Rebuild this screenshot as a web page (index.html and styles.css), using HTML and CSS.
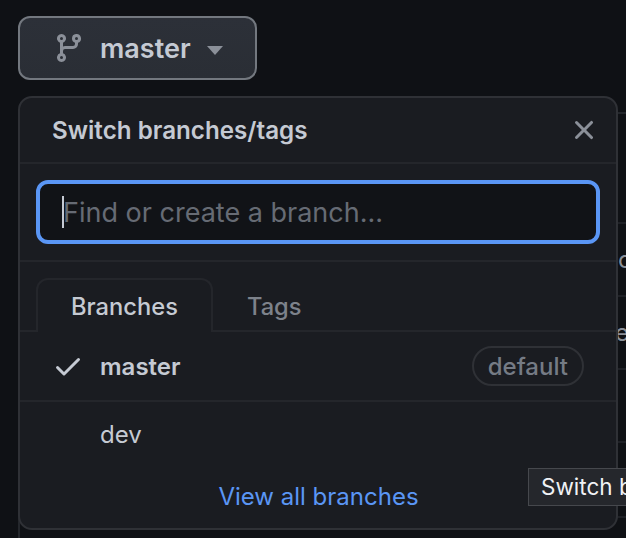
FILE: index.html
```html
<!DOCTYPE html>
<html lang="en">
<head>
<meta charset="utf-8">
<title>Switch branches</title>
<link rel="stylesheet" href="styles.css">
</head>
<body>
<div class="page">
  <button class="branch-btn">
    <svg class="icon-branch" viewBox="0 0 16 16" width="32" height="32"><path fill-rule="evenodd" d="M11.75 2.5a.75.75 0 100 1.5.75.75 0 000-1.5zm-2.25.75a2.25 2.25 0 113 2.122V6A2.5 2.5 0 0110 8.5H6a1 1 0 00-1 1v1.128a2.251 2.251 0 11-1.5 0V5.372a2.25 2.25 0 111.5 0v1.836A2.492 2.492 0 016 7h4a1 1 0 001-1v-.628A2.25 2.25 0 019.5 3.25zM4.25 12a.75.75 0 100 1.5.75.75 0 000-1.5zM3.5 3.25a.75.75 0 111.5 0 .75.75 0 01-1.5 0z"/></svg>
    <span class="branch-name">master</span>
    <span class="caret"></span>
  </button>

  <div class="files">
    <div class="file-row r1"></div>
    <div class="file-row r2"><span class="file-c">config</span></div>
    <div class="file-row r3"><span class="file-e">e</span></div>
    <div class="file-row r4"></div>
    <div class="file-row r5"></div>
    <div class="file-row r6"></div>

    <div class="popup">
      <header class="popup-head">
        <span class="popup-title">Switch branches/tags</span>
        <svg class="icon-x" viewBox="0 0 16 16" width="32" height="32"><path fill-rule="evenodd" d="M3.72 3.72a.75.75 0 011.06 0L8 6.94l3.22-3.22a.75.75 0 111.06 1.06L9.06 8l3.22 3.22a.75.75 0 11-1.06 1.06L8 9.06l-3.22 3.22a.75.75 0 01-1.06-1.06L6.94 8 3.72 4.78a.75.75 0 010-1.06z"/></svg>
      </header>
      <div class="filter">
        <div class="filter-input"><span class="text-caret"></span><span class="placeholder">Find or create a branch...</span></div>
      </div>
      <nav class="tabs">
        <span class="tab active">Branches</span>
        <span class="tab">Tags</span>
      </nav>
      <div class="row">
        <svg class="icon-check" viewBox="0 0 16 16" width="32" height="32"><path fill-rule="evenodd" d="M13.78 4.22a.75.75 0 010 1.06l-7.25 7.25a.75.75 0 01-1.06 0L2.22 9.28a.75.75 0 011.06-1.06L6 10.94l6.72-6.72a.75.75 0 011.06 0z"/></svg>
        <span class="row-name strong">master</span>
        <span class="badge">default</span>
      </div>
      <div class="row plain">
        <span class="row-name">dev</span>
      </div>
      <a class="view-all">View all branches</a>
    </div>
  </div>
  <div class="tooltip">Switch branches/tags</div>
</div>
</body>
</html>
```
FILE: styles.css
```css
* { box-sizing: border-box; }
html, body { margin: 0; height: 100%; }
body {
  background: #0f1115;
  font-family: Inter, "Noto Sans", "Liberation Sans", sans-serif;
  overflow: hidden;
}
.page {
  position: relative;
  width: 626px;
  height: 538px;
  padding: 16px 0 0 18px;
  overflow: hidden;
}
.branch-btn {
  display: flex;
  align-items: center;
  width: 239px;
  height: 64px;
  padding: 0 0 0 33px;
  background: linear-gradient(#2c3038, #2a2e35);
  border: 2px solid #73787f;
  border-radius: 12px;
  font: inherit;
  color: #c5cad3;
}
.icon-branch { fill: #8b9099; flex: none; }
.branch-name {
  margin: 2px 0 0 15px;
  font-size: 27px;
  font-weight: 600;
  line-height: 32px;
}
.caret {
  margin: 4px 0 0 16px;
  border-style: solid;
  border-width: 9px 8px 0;
  border-color: #8b9099 transparent transparent;
}
.files {
  position: relative;
  margin-top: 32px;
  width: 700px;
  height: 460px;
  border: solid #24272c;
  border-width: 2px 0 0 2px;
  border-top-left-radius: 12px;
}
.file-row {
  display: flex;
  align-items: center;
  height: 73px;
  border-bottom: 2px solid #1f2126;
  font-size: 24px;
  color: #8b9099;
}
.r1 { height: 110px; }
.r5 { height: 75px; }
.file-c { margin-left: 598px; }
.file-e { margin-left: 595px; }
.popup {
  position: absolute;
  left: -2px;
  top: -18px;
  width: 600px;
  height: 434px;
  display: flex;
  flex-direction: column;
  background: #1a1c21;
  border: 2px solid #2f3136;
  border-radius: 14px;
  overflow: hidden;
}
.popup-head {
  display: flex;
  align-items: center;
  justify-content: space-between;
  height: 66px;
  padding: 0 16px 0 32px;
  border-bottom: 2px solid #24262b;
  flex: none;
}
.popup-title {
  font-size: 24.2px;
  font-weight: 600;
  color: #c5cad3;
}
.icon-x { fill: #8b9099; }
.filter {
  flex: none;
  height: 98px;
  padding: 16px 16px 0;
  border-bottom: 2px solid #24262b;
}
.filter-input {
  display: flex;
  align-items: center;
  height: 64px;
  width: 564px;
  padding-left: 22px;
  background: #111317;
  border: 4px solid #5a96f5;
  border-radius: 12px;
}
.text-caret {
  width: 2px;
  height: 32px;
  margin-right: -1px;
  background: #c5cad3;
  flex: none;
}
.placeholder {
  margin-top: 2px;
  font-size: 27px;
  color: #666b74;
  line-height: 32px;
}
.tabs {
  flex: none;
  display: flex;
  height: 70px;
  padding: 16px 0 0 16px;
  border-bottom: 2px solid #24262b;
}
.tab {
  display: flex;
  align-items: center;
  justify-content: center;
  height: 54px;
  padding: 0 33px;
  font-size: 23.7px;
  font-weight: 500;
  color: #7d828b;
  border: 2px solid transparent;
  border-bottom: 0;
}
.tab + .tab { margin-left: -1px; }
.tab.active {
  color: #c5cad3;
  background: #1a1c21;
  border-color: #24262b;
  border-radius: 12px 12px 0 0;
  position: relative;
  height: 54px;
}
.row {
  flex: none;
  display: flex;
  align-items: center;
  height: 70px;
  padding: 0 32px;
  border-bottom: 2px solid #24262b;
}
.row.plain {
  border-bottom: 0;
  padding-left: 80px;
  height: 64px;
}
.icon-check { fill: #c5cad3; flex: none; }
.row-name {
  font-size: 24px;
  color: #c5cad3;
}
.row-name.strong {
  margin-left: 16px;
  font-weight: 600;
}
.badge {
  margin-left: auto;
  height: 40px;
  padding: 0 14px;
  display: flex;
  align-items: center;
  border: 2px solid #2f3136;
  border-radius: 20px;
  font-size: 24px;
  font-weight: 500;
  color: #757b85;
}
.view-all {
  display: block;
  padding-left: 1px;
  text-align: center;
  font-size: 24px;
  color: #5a96f5;
  line-height: 30px;
  margin-top: 16px;
}
.tooltip {
  position: absolute;
  left: 528px;
  top: 468px;
  width: 300px;
  height: 38px;
  padding-left: 12px;
  background: #25272c;
  border: 1px solid #46484d;
  font-size: 22.5px;
  line-height: 36px;
  color: #f0f2f5;
  white-space: nowrap;
}
```
